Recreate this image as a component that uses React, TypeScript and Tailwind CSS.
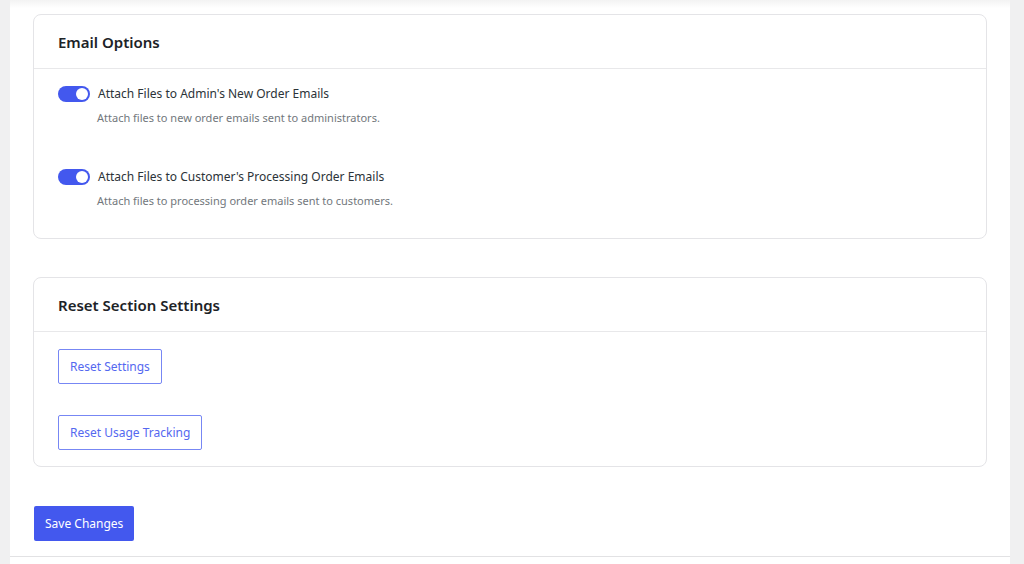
import { useState } from "react";

interface EmailOption {
  id: string;
  label: string;
  description: string;
}

const emailOptions: EmailOption[] = [
  {
    id: "admin",
    label: "Attach Files to Admin's New Order Emails",
    description: "Attach files to new order emails sent to administrators.",
  },
  {
    id: "customer",
    label: "Attach Files to Customer's Processing Order Emails",
    description: "Attach files to processing order emails sent to customers.",
  },
];

const Toggle = ({ on, onClick }: { on: boolean; onClick: () => void }) => (
  <button
    onClick={onClick}
    className={`relative h-4 w-8 shrink-0 rounded-full transition ${on ? "bg-[#4358ee]" : "bg-gray-300"}`}
    aria-pressed={on}
  >
    <span
      className={`absolute top-[2px] h-3 w-3 rounded-full bg-white transition ${on ? "left-[18px]" : "left-[2px]"}`}
    />
  </button>
);

const Card = ({ title, children }: { title: string; children: React.ReactNode }) => (
  <section className="rounded-lg border border-[#e4e4e7] bg-white">
    <div className="border-b border-[#e8e8ea] px-6 pt-[17px] pb-[16px]">
      <h2 className="text-[15px] leading-5 font-semibold text-[#1d2327]">{title}</h2>
    </div>
    {children}
  </section>
);

export default function App() {
  const [enabled, setEnabled] = useState<Record<string, boolean>>({
    admin: true,
    customer: true,
  });

  return (
    <div className="h-[564px] overflow-hidden bg-[#f0f0f1] pr-[14px] pl-[10px] font-['Noto_Sans',sans-serif]">
      <div className="h-full bg-white">
        <div className="h-[557px] border-b border-[#e2e2e4] bg-gradient-to-b from-[#f3f3f3] via-white via-[8px] to-white px-[23px] pt-[14px]">
          <Card title="Email Options">
            <div className="flex flex-col gap-[39px] px-6 pt-[15px] pb-[27px]">
              {emailOptions.map((opt) => (
                <div key={opt.id}>
                  <div className="flex items-center gap-2">
                    <Toggle
                      on={enabled[opt.id]}
                      onClick={() => setEnabled((s) => ({ ...s, [opt.id]: !s[opt.id] }))}
                    />
                    <span className="text-[12px] leading-5 text-[#2c3338]">{opt.label}</span>
                  </div>
                  <p className="mt-[4px] pl-[39px] text-[11px] leading-5 text-[#72777c]">
                    {opt.description}
                  </p>
                </div>
              ))}
            </div>
          </Card>

          <div className="mt-[38px]">
            <Card title="Reset Section Settings">
              <div className="flex flex-col items-start gap-[31px] px-6 pt-[17px] pb-4">
                <button className="h-[35px] rounded-[2px] border border-[#7787f4] px-[11px] text-[12px] text-[#5468f0]">
                  Reset Settings
                </button>
                <button className="h-[35px] rounded-[2px] border border-[#7787f4] px-[11px] text-[12px] text-[#5468f0]">
                  Reset Usage Tracking
                </button>
              </div>
            </Card>
          </div>

          <button className="mt-[39px] ml-px h-[35px] rounded-[2px] bg-[#4358ee] px-[11px] text-[12px] text-white">
            Save Changes
          </button>
        </div>
      </div>
    </div>
  );
}
